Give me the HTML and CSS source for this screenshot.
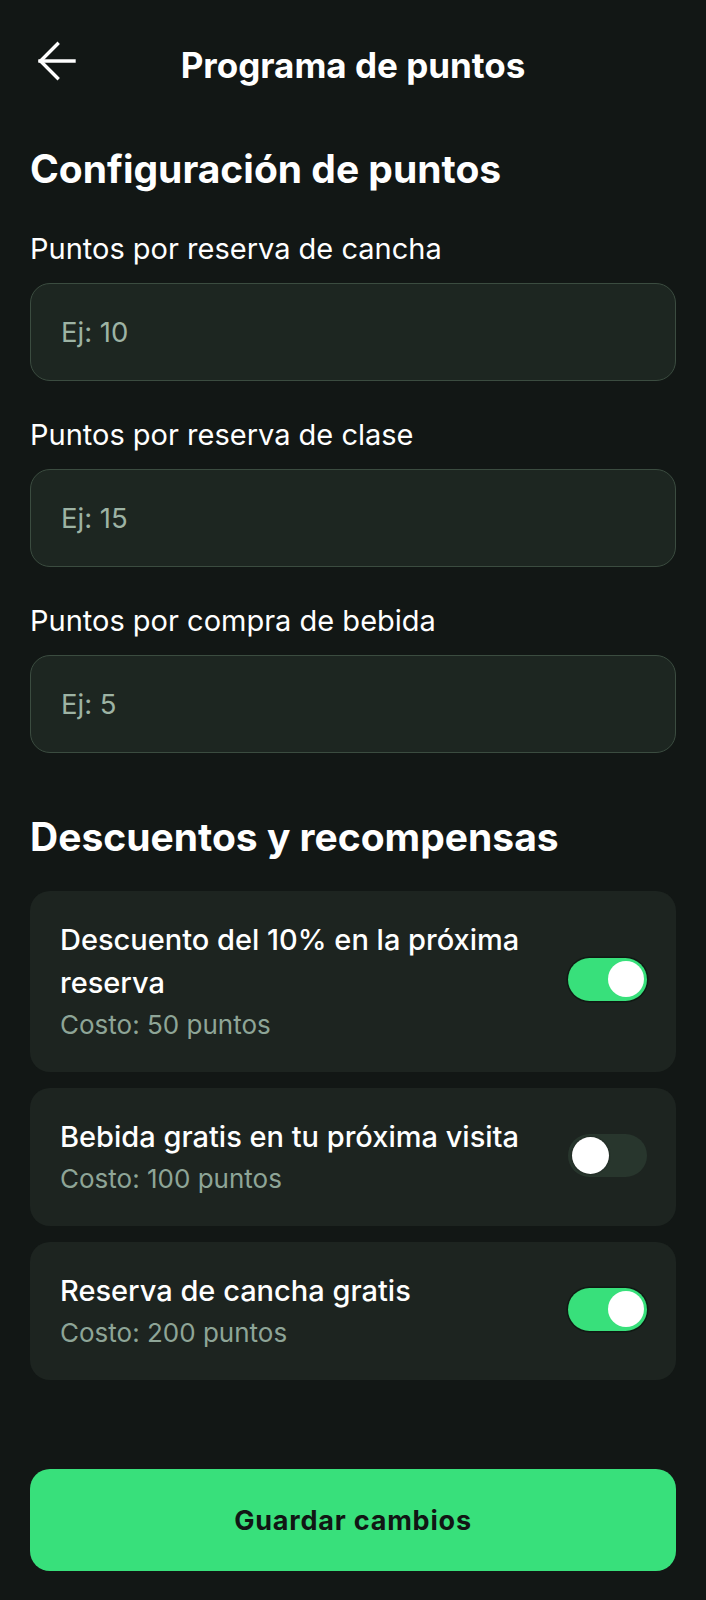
FILE: index.html
```html
<!DOCTYPE html>
<html lang="es">
<head>
<meta charset="utf-8">
<title>Programa de puntos</title>
<link rel="stylesheet" href="styles.css">
</head>
<body>
<div class="screen">
  <header class="topbar">
    <button class="back" aria-label="Volver">
      <svg width="40" height="40" viewBox="0 0 40 40" fill="none" stroke="#ffffff" stroke-width="3.4" stroke-linecap="square" stroke-linejoin="miter">
        <path d="M3 20H37"/>
        <path d="M20.5 3L3.5 20L20.5 37"/>
      </svg>
    </button>
    <h1 class="title">Programa de puntos</h1>
    <span class="spacer"></span>
  </header>

  <main class="content">
    <h2 class="section-title first">Configuración de puntos</h2>

    <div class="fields">
      <div class="field">
        <label class="field-label" for="f1">Puntos por reserva de cancha</label>
        <input class="field-input" id="f1" type="text" placeholder="Ej: 10">
      </div>
      <div class="field">
        <label class="field-label" for="f2">Puntos por reserva de clase</label>
        <input class="field-input" id="f2" type="text" placeholder="Ej: 15">
      </div>
      <div class="field">
        <label class="field-label" for="f3">Puntos por compra de bebida</label>
        <input class="field-input" id="f3" type="text" placeholder="Ej: 5">
      </div>
    </div>

    <h2 class="section-title second">Descuentos y recompensas</h2>

    <div class="rewards">
      <div class="reward">
        <div class="reward-text">
          <div class="reward-name">Descuento del 10% en la próxima reserva</div>
          <div class="reward-cost">Costo: 50 puntos</div>
        </div>
        <span class="toggle on"><span class="thumb"></span></span>
      </div>
      <div class="reward">
        <div class="reward-text">
          <div class="reward-name">Bebida gratis en tu próxima visita</div>
          <div class="reward-cost">Costo: 100 puntos</div>
        </div>
        <span class="toggle"><span class="thumb"></span></span>
      </div>
      <div class="reward">
        <div class="reward-text">
          <div class="reward-name">Reserva de cancha gratis</div>
          <div class="reward-cost">Costo: 200 puntos</div>
        </div>
        <span class="toggle on"><span class="thumb"></span></span>
      </div>
    </div>

    <button class="save">Guardar cambios</button>
  </main>
</div>
</body>
</html>
```

FILE: styles.css
```css
* { box-sizing: border-box; }

html, body {
  margin: 0;
  padding: 0;
  background: #121715;
}

body {
  font-family: "Inter", "Noto Sans", sans-serif;
  color: #ffffff;
}

.screen {
  width: 706px;
  min-height: 1600px;
  background: #121715;
}

.topbar {
  height: 130px;
  display: grid;
  grid-template-columns: 1fr auto 1fr;
  align-items: center;
  padding: 0 30px;
}

.back {
  justify-self: start;
  width: 40px;
  height: 40px;
  margin-left: 7px;
  margin-top: -8px;
  padding: 0;
  border: 0;
  background: transparent;
  display: flex;
}

.title {
  margin: 0;
  font-size: 35px;
  line-height: 35px;
  font-weight: 700;
  letter-spacing: 0;
}

.content {
  padding: 0 30px;
  display: flex;
  flex-direction: column;
}

.section-title {
  margin: 0;
  font-size: 39px;
  line-height: 46px;
  font-weight: 700;
  letter-spacing: 0;
}

.section-title.first {
  margin-top: 16px;
  margin-bottom: 39px;
}

.section-title.second {
  margin-top: 61px;
  margin-bottom: 31px;
}

.fields {
  display: flex;
  flex-direction: column;
  gap: 36px;
}

.field {
  display: flex;
  flex-direction: column;
}

.field-label {
  font-size: 29px;
  line-height: 36px;
  font-weight: 400;
  margin-bottom: 16px;
}

.field-input {
  height: 98px;
  width: 100%;
  border: 1.5px solid #3b4c40;
  border-radius: 20px;
  background: #1d2621;
  padding: 0 30px;
  font-family: inherit;
  font-size: 27.5px;
  color: #ffffff;
  outline: none;
}

.field-input::placeholder {
  color: #9db3a4;
  opacity: 1;
}

.rewards {
  display: flex;
  flex-direction: column;
  gap: 16px;
}

.reward {
  background: #1d2420;
  border-radius: 20px;
  padding: 27px 29px 31px 30px;
  display: flex;
  align-items: center;
  gap: 40px;
}

.reward-text {
  flex: 1;
  display: flex;
  flex-direction: column;
  gap: 5px;
}

.reward-name {
  font-size: 29px;
  line-height: 43px;
  font-weight: 500;
}

.reward-cost {
  font-size: 26px;
  line-height: 32px;
  color: #8ea597;
}

.toggle {
  position: relative;
  flex: none;
  width: 79px;
  height: 43px;
  border-radius: 22px;
  background: #28362d;
}

.toggle .thumb {
  position: absolute;
  top: 3px;
  left: 4px;
  width: 37px;
  height: 37px;
  border-radius: 50%;
  background: #ffffff;
  box-shadow: 0 0 2px rgba(0,0,0,0.6);
}

.toggle.on {
  background: #38e07b;
  box-shadow: 0 0 0 1.5px #0f1a13;
}

.toggle.on .thumb {
  left: auto;
  right: 3px;
  width: 36px;
  height: 36px;
  box-shadow: none;
}

.save {
  margin-top: 89px;
  height: 102px;
  width: 100%;
  border: 0;
  border-radius: 20px;
  background: #38e07b;
  color: #111614;
  font-family: inherit;
  font-size: 27px;
  font-weight: 700;
  letter-spacing: 0.8px;
}
```
